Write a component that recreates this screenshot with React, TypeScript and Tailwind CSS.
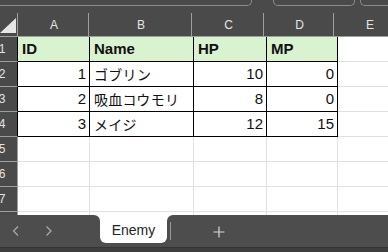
import React from 'react'

type Cell = { text: string; align: 'left' | 'right'; bold?: boolean; jp?: boolean }

const colW = ['w-[72px]', 'w-[104px]', 'w-[73px]', 'w-[71px]', 'w-[72px]']
const letters = ['A', 'B', 'C', 'D', 'E']

const header: Cell[] = [
  { text: 'ID', align: 'left', bold: true },
  { text: 'Name', align: 'left', bold: true },
  { text: 'HP', align: 'left', bold: true },
  { text: 'MP', align: 'left', bold: true },
]

const enemies = [
  { id: 1, name: 'ゴブリン', hp: 10, mp: 0 },
  { id: 2, name: '吸血コウモリ', hp: 8, mp: 0 },
  { id: 3, name: 'メイジ', hp: 12, mp: 15 },
]

const rows: Cell[][] = [
  header,
  ...enemies.map(e => [
    { text: String(e.id), align: 'right' as const },
    { text: e.name, align: 'left' as const, jp: true },
    { text: String(e.hp), align: 'right' as const },
    { text: String(e.mp), align: 'right' as const },
  ]),
]

const sans = "font-['Liberation_Sans',Arial,sans-serif]"

function RowHeader({ n, table, label }: { n: number; table: boolean; label: boolean }) {
  return (
    <div
      className={`w-[18px] h-full shrink-0 overflow-hidden border-b border-r border-b-[#9e9e9e] ${
        table ? 'border-r-black' : 'border-r-[#9e9e9e]'
      } flex items-center`}
    >
      {label && (
        <div className={`w-[32px] -ml-[14px] shrink-0 text-center text-[12px] text-[#e4e4e4] ${sans}`}>{n}</div>
      )}
    </div>
  )
}

function DataRow({ n, cells, label }: { n: number; cells?: Cell[]; label: boolean }) {
  const inTable = !!cells
  return (
    <div className="flex h-[25px] shrink-0">
      <RowHeader n={n} table={inTable} label={label} />
      {colW.map((w, i) => {
        const c = cells && i < 4 ? cells[i] : undefined
        const isTable = inTable && i < 4
        const bg = isTable && n === 1 ? 'bg-[#d9f2d0]' : 'bg-white'
        const br = isTable ? 'border-r-black' : 'border-r-[#e1e1e1]'
        const bb = isTable ? 'border-b-black' : 'border-b-[#e1e1e1]'
        return (
          <div
            key={i}
            className={`${w} shrink-0 h-full border-r border-b ${br} ${bb} ${bg} flex items-center ${
              c?.align === 'right' ? 'justify-end pr-[3px]' : 'pl-[4px]'
            } overflow-hidden whitespace-nowrap text-[#111]`}
          >
            {c &&
              (c.jp ? (
                <span className="text-[14px] font-['Noto_Sans_CJK_JP',sans-serif] tracking-[0.3px]">{c.text}</span>
              ) : (
                <span className={`text-[15px] ${sans} ${c.bold ? 'font-bold' : ''}`}>{c.text}</span>
              ))}
          </div>
        )
      })}
    </div>
  )
}

export default function App() {
  return (
    <div className="w-[388px] h-[252px] overflow-hidden bg-[#4a4a4a] flex flex-col select-none">
      {/* toolbar remnants */}
      <div className="h-[13px] shrink-0 flex items-start">
        <div className="-ml-[10px] w-[276px] h-[6px] border-b border-r border-[#8c8c8c] rounded-br-[5px]" />
        <div className="ml-[21px] w-[86px] h-[6px] border-b border-x border-[#8c8c8c] rounded-b-[5px]" />
        <div className="ml-[5px] w-[30px] h-[6px] border-b border-l border-[#8c8c8c] rounded-bl-[5px]" />
      </div>

      {/* column headers */}
      <div className="flex h-[24px] shrink-0 border-b border-[#9e9e9e]">
        <div className="w-[18px] shrink-0 flex items-start pt-[5px]">
          <svg width="17" height="16" viewBox="0 0 17 16">
            <polygon points="16,0 16,15 0,15" fill="#e6e6e6" />
          </svg>
        </div>
        {colW.map((w, i) => (
          <div
            key={i}
            className={`${w} shrink-0 border-l border-[#9e9e9e] -ml-px first:ml-0 flex justify-center pt-[3px] text-[12px] text-[#e4e4e4] ${sans}`}
          >
            <span className="ml-px">{letters[i]}</span>
          </div>
        ))}
      </div>

      {/* grid */}
      <div className="flex-1 flex flex-col overflow-hidden">
        {[1, 2, 3, 4, 5, 6, 7, 8].map(n => (
          <DataRow key={n} n={n} cells={rows[n - 1]} label={n < 8} />
        ))}
      </div>

      {/* sheet tabs */}
      <div className="h-[32px] shrink-0 flex bg-white">
        <div className="w-[100px] shrink-0 bg-[#4d4d4d] rounded-tr-[6px] flex items-center">
          <svg width="8" height="10" viewBox="0 0 8 10" className="ml-[12px]">
            <polyline points="6,0.5 1.5,5 6,9.5" fill="none" stroke="#a8a8a8" strokeWidth="1.3" />
          </svg>
          <svg width="8" height="10" viewBox="0 0 8 10" className="ml-[25px]">
            <polyline points="1.5,0.5 6,5 1.5,9.5" fill="none" stroke="#a8a8a8" strokeWidth="1.3" />
          </svg>
        </div>
        <div className="w-[67px] shrink-0 bg-[#4d4d4d]">
          <div className="h-[28px] bg-white rounded-b-[6px] flex flex-col items-center pt-[7px]">
            <span className={`text-[14px] leading-[16px] text-[#242424] ${sans}`}>Enemy</span>
            <div className="mt-[5px] w-[50px] h-[2px] bg-[#107c41] rounded-full" />
          </div>
        </div>
        <div className="flex-1 bg-[#4d4d4d] rounded-tl-[6px] flex items-center">
          <div className="ml-[3px] w-px h-[18px] bg-[#9a9a9a]" />
          <svg width="12" height="12" viewBox="0 0 12 12" className="ml-[42px] mt-[1px]">
            <path d="M6 0.5v11M0.5 6h11" stroke="#d8d8d8" strokeWidth="1.2" />
          </svg>
        </div>
      </div>
      <div className="h-[5px] shrink-0 bg-[#3e3e3e] border-t border-[#353535]" />
    </div>
  )
}
